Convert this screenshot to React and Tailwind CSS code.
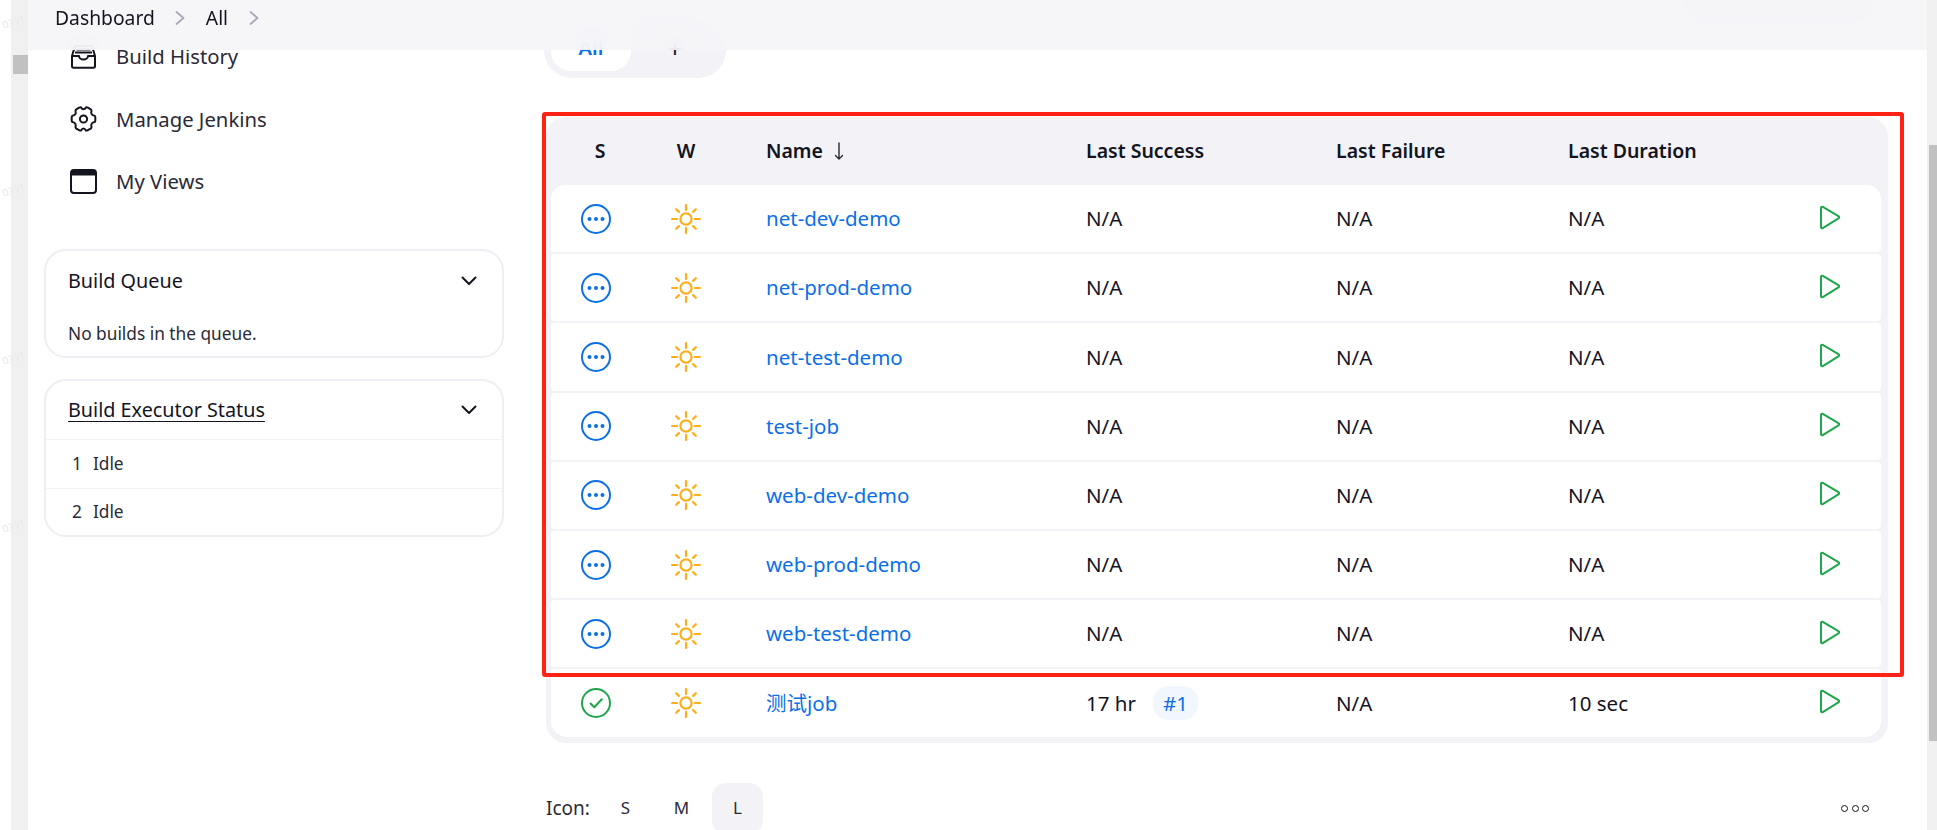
import React from "react";

const font = "font-['Noto_Sans','Noto_Sans_CJK_SC',sans-serif]";

function StatusDots() {
  return (
    <svg width="30" height="30" viewBox="0 0 30 30" fill="none">
      <circle cx="15" cy="15" r="14" stroke="#0b6fe8" strokeWidth="2" />
      <circle cx="8.500" cy="15" r="2" fill="#0b6fe8" />
      <circle cx="15" cy="15" r="2" fill="#0b6fe8" />
      <circle cx="21.500" cy="15" r="2" fill="#0b6fe8" />
    </svg>
  );
}

function StatusOk() {
  return (
    <svg width="30" height="30" viewBox="0 0 30 30" fill="none">
      <circle cx="15" cy="15" r="14" stroke="#1ea64b" strokeWidth="2" />
      <path d="M9.500 15.500l3.800 3.800 7.500-8" stroke="#1ea64b" strokeWidth="2" strokeLinecap="round" strokeLinejoin="round" />
    </svg>
  );
}

function Sun() {
  return (
    <svg width="30" height="30" viewBox="0 0 30 30" fill="none" stroke="#ffae1a" strokeWidth="2.200" strokeLinecap="round">
      <circle cx="15" cy="15" r="5.600" />
      <path d="M15 1.100v5M15 23.900v5M1.100 15h5M23.900 15h5M5.200 5.200l2.700 2.700M22.100 22.100l2.700 2.700M5.200 24.800l2.700-2.700M22.100 7.900l2.700-2.700" />
    </svg>
  );
}

function Play() {
  return (
    <svg width="22" height="25" viewBox="0 0 22 25" fill="none">
      <path d="M2 3c0-1 .9-1.500 1.800-1.100l15.600 9.200c1 .6 1 1.700 0 2.300L3.800 23.100C2.900 23.600 2 23 2 22z" stroke="#1ea64b" strokeWidth="2" strokeLinejoin="round" />
    </svg>
  );
}

function Chevron() {
  return (
    <svg width="16" height="10" viewBox="0 0 16 10" fill="none">
      <path d="M1.500 1.500L8 8l6.500-6.500" stroke="#14141f" strokeWidth="2" strokeLinecap="round" strokeLinejoin="round" />
    </svg>
  );
}

function Crumb() {
  return (
    <svg width="10" height="14" viewBox="0 0 10 14" fill="none">
      <path d="M1.500 1L8.500 7l-7 6" stroke="#a9a9b8" strokeWidth="1.800" strokeLinecap="round" strokeLinejoin="round" />
    </svg>
  );
}

function HistoryIcon() {
  return (
    <svg width="27" height="26" viewBox="0 0 27 26" fill="none" stroke="#14141f" strokeWidth="2" strokeLinejoin="round">
      <path d="M6.500 6.500h14M5 9.500h17" />
      <path d="M2 13L5 3h17l3 10v10c0 1-.6 1.700-1.500 1.700h-20C2.600 24.700 2 24 2 23z" />
      <path d="M2 13h7c0 2 2 3.500 4.500 3.500S18 15 18 13h7" />
    </svg>
  );
}

function GearIcon() {
  return (
    <svg width="27" height="28" viewBox="0 0 26 28" fill="none" stroke="#14141f" strokeWidth="2" strokeLinejoin="round">
      <circle cx="13" cy="14" r="3.600" />
      <path d="M10.600 2.400c1.200 2.600 3.600 2.600 4.800 0 .6-.2 1.300 0 2 .3l2.800 1.600c.5.4.7 1 .8 1.700-.9 2.600.4 4.600 3.200 4.800.4.500.6 1.100.6 1.700v3c0 .6-.2 1.200-.6 1.600-2.800.3-4.100 2.300-3.200 4.900-.1.700-.3 1.200-.8 1.600l-2.800 1.600c-.7.4-1.400.5-2 .3-1.200-2.600-3.600-2.600-4.800 0-.6.2-1.300.1-2-.3l-2.800-1.600c-.5-.4-.7-.9-.8-1.600.9-2.600-.4-4.600-3.200-4.900-.4-.4-.6-1-.6-1.600v-3c0-.6.2-1.200.6-1.700 2.800-.2 4.100-2.200 3.200-4.800.1-.7.3-1.300.8-1.700l2.800-1.600c.7-.3 1.400-.5 2-.3z" />
    </svg>
  );
}

function WindowIcon() {
  return (
    <svg width="27" height="25" viewBox="0 0 27 25" fill="none">
      <rect x="1" y="1" width="25" height="23" rx="3" stroke="#14141f" strokeWidth="2" />
      <path d="M1 4c0-1.700 1.300-3 3-3h19c1.700 0 3 1.300 3 3v2.500H1z" fill="#14141f" />
    </svg>
  );
}

const jobs = ["net-dev-demo", "net-prod-demo", "net-test-demo", "test-job", "web-dev-demo", "web-prod-demo", "web-test-demo"];
const cols = "grid grid-cols-[90px_90px_355px_250px_232px_200px_1fr] items-center";

function Row({ name, ok, first }) {
  const corner = first ? "rounded-t-[14px] rounded-b-[4px]" : ok ? "rounded-t-[4px] rounded-b-[16px]" : "rounded-[4px]";
  return (
    <div className={`${cols} ${corner} h-[67.2px] bg-white text-[20.5px] text-[#14141f]`}>
      <div className="flex justify-center">{ok ? <StatusOk /> : <StatusDots />}</div>
      <div className="flex justify-center"><Sun /></div>
      <div className="pl-[35px]"><a className="text-[#0b6fe8]">{name}</a></div>
      {ok ? (
        <div className="flex items-center gap-[17px]">
          <span>17 hr</span>
          <span className="h-[34px] w-[45px] rounded-[15px] bg-[#f2f7fe] text-[#0b6fe8] flex items-center justify-center">#1</span>
        </div>
      ) : (
        <div>N/A</div>
      )}
      <div>N/A</div>
      <div>{ok ? "10 sec" : "N/A"}</div>
      <div className="flex justify-end pr-[40px] -mt-[3px]"><Play /></div>
    </div>
  );
}

function SideLink({ icon, label }) {
  return (
    <div className="h-[62.5px] pl-[42px] flex items-center gap-[19px] text-[20.3px] text-[#2a2a36]">
      <span className="w-[27px] flex justify-center">{icon}</span>
      <span>{label}</span>
    </div>
  );
}

function Watermark() {
  return (
    <div className="absolute inset-y-0 left-0 w-[28px] pointer-events-none">
      <div className="flex flex-col gap-[154px] pt-[14px] pl-[2px]">
        {[0, 1, 2, 3].map((i) => (
          <span key={i} className="block h-[14px] text-[10px] text-[#eaeaea] -rotate-[18deg] leading-[14px]">0391</span>
        ))}
      </div>
    </div>
  );
}

export default function App() {
  return (
    <div className={`${font} relative w-[1937px] h-[830px] overflow-hidden bg-white flex`}>
      <div className="w-[11px] bg-white shrink-0" />
      <div className="w-[17px] bg-[#f0f0f0] shrink-0 pt-[55px] pl-[2px]">
        <div className="h-[19px] bg-[#c1c1c1]" />
      </div>
      <Watermark />

      <div className="relative flex-1 min-w-0 overflow-hidden">
        <div className="absolute top-0 inset-x-0 h-[50px] z-10 bg-[#f5f5f8]/90 backdrop-blur-md flex items-center pb-[14px] pl-[27px] text-[19.3px] text-[#14141f]">
          <span>Dashboard</span>
          <span className="ml-[20px] mr-[21px] flex"><Crumb /></span>
          <span>All</span>
          <span className="ml-[21px] flex"><Crumb /></span>
        </div>

        <div className="flex">
          <aside className="w-[518px] shrink-0 pt-[25px]">
            <SideLink icon={<HistoryIcon />} label="Build History" />
            <SideLink icon={<GearIcon />} label="Manage Jenkins" />
            <SideLink icon={<WindowIcon />} label="My Views" />
            <div className="mt-[36.5px] ml-[16px] w-[460px] flex flex-col gap-[21px] text-[#14141f]">
              <div className="h-[109px] border-2 border-[#eeeef4] rounded-[22px]">
                <div className="h-[60px] pl-[22px] pr-[25px] flex items-center justify-between text-[19.8px]">
                  <span>Build Queue</span>
                  <Chevron />
                </div>
                <div className="h-[45px] pl-[22px] flex items-center text-[17.300px] text-[#2a2a36]">No builds in the queue.</div>
              </div>
              <div className="h-[158px] border-2 border-[#eeeef4] rounded-[22px]">
                <div className="h-[58px] pl-[22px] pr-[25px] flex items-center justify-between text-[19.8px]">
                  <span className="underline underline-offset-[4px] decoration-1">Build Executor Status</span>
                  <Chevron />
                </div>
                <div className="h-[49px] border-t border-[#f2f2f7] pl-[26px] flex items-center gap-[11px] text-[17.300px] text-[#2a2a36]">
                  <span>1</span><span>Idle</span>
                </div>
                <div className="h-[47px] border-t border-[#f2f2f7] pl-[26px] flex items-center gap-[11px] text-[17.300px] text-[#2a2a36]">
                  <span>2</span><span>Idle</span>
                </div>
              </div>
            </div>
          </aside>

          <main className="w-[1342px] shrink-0">
            <div className="mt-[14px] mb-[39px] h-[64px] flex justify-between">
              <div className="h-[64px] w-[182px] -ml-[2px] bg-[#f2f2f7] rounded-[28px] px-[7px] flex items-end pb-[7px] text-[20px]">
                <div className="h-[46px] w-[80px] bg-white rounded-[20px] flex items-center justify-center text-[#0b6fe8] font-semibold">All</div>
                <div className="flex-1 h-[46px] flex items-center justify-center text-[#14141f] text-[26px]">+</div>
              </div>
              <div className="-mt-[14px] mr-[14px] h-[26px] w-[190px] bg-[#eeeef3] rounded-b-[22px]" />
            </div>
            <div className="bg-[#f2f2f7] rounded-[20px] pb-[6px] pl-[5px] pr-[7px]">
              <div className={`${cols} h-[68px] text-[19.5px] font-semibold text-[#14141f]`}>
                <div className="text-center pl-[8px]">S</div>
                <div className="text-center">W</div>
                <div className="pl-[35px] flex items-center gap-[11px]">
                  Name
                  <svg width="10" height="18" viewBox="0 0 10 18" fill="none" stroke="#2a2a36" strokeWidth="1.400" strokeLinecap="round" strokeLinejoin="round">
                    <path d="M5 1v16M1.500 13.500L5 17l3.500-3.500" />
                  </svg>
                </div>
                <div>Last Success</div>
                <div>Last Failure</div>
                <div>Last Duration</div>
                <div />
              </div>
              <div className="flex flex-col gap-[2px]">
                {jobs.map((j, i) => <Row key={j} name={j} first={i === 0} />)}
                <Row name="测试job" ok />
              </div>
            </div>
            <div className="mt-[40px] h-[51px] flex items-center text-[19px] text-[#2a2a36]">
              <span className="w-[54px]">Icon:</span>
              <div className="w-[51px] h-[51px] flex items-center justify-center text-[17px]">S</div>
              <div className="w-[5px]" />
              <div className="w-[51px] h-[51px] flex items-center justify-center text-[17px]">M</div>
              <div className="w-[5px]" />
              <div className="w-[51px] h-[51px] flex items-center justify-center text-[17px] bg-[#f2f2f7] rounded-[14px]">L</div>
              <div className="ml-auto mr-[19px] flex gap-[3.5px]">
                <span className="w-[7px] h-[7px] rounded-full border-[1.5px] border-[#14141f]" />
                <span className="w-[7px] h-[7px] rounded-full border-[1.5px] border-[#14141f]" />
                <span className="w-[7px] h-[7px] rounded-full border-[1.5px] border-[#14141f]" />
              </div>
            </div>
          </main>
        </div>

        <div className="absolute left-[514px] top-[112px] w-[1362px] h-[565px] border-4 border-[#ff2215] rounded-[3px] pointer-events-none" />
      </div>

      <div className="w-[10px] bg-[#f0f0f0] shrink-0 pt-[145px] pl-[2px] relative z-20">
        <div className="h-[596px] bg-[#c1c1c1]" />
      </div>
    </div>
  );
}
